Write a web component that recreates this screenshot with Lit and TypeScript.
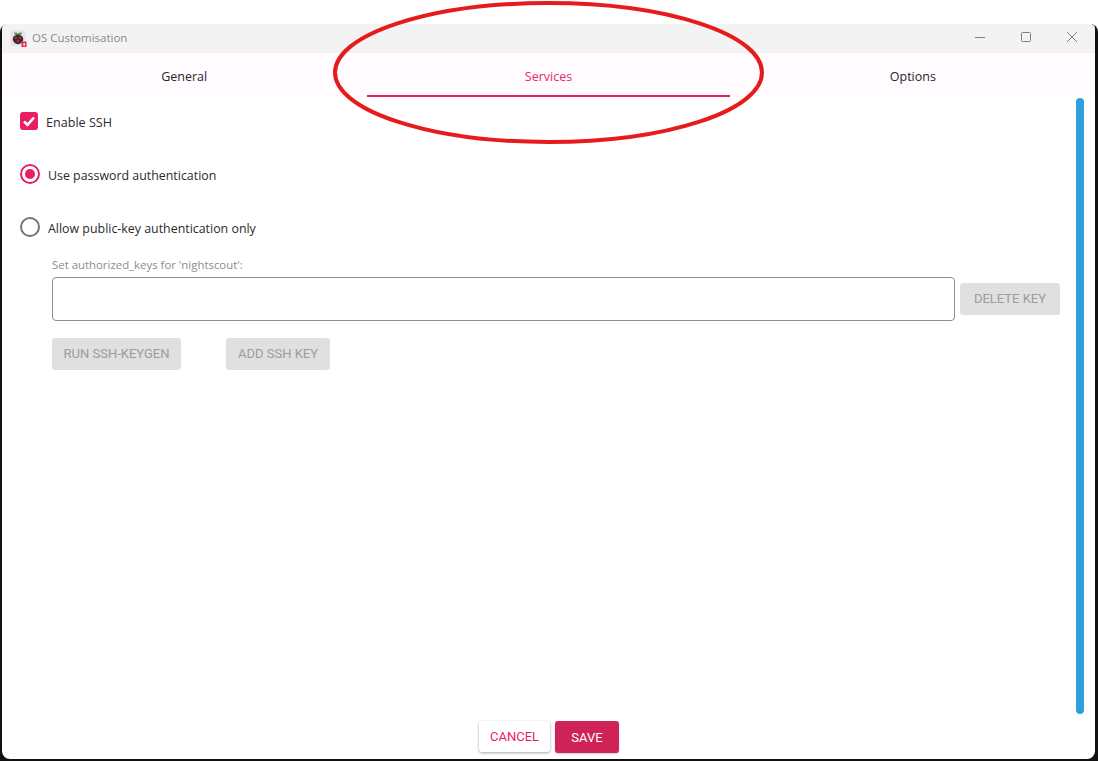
import { LitElement, html, css } from "lit";
import { customElement } from "lit/decorators.js";

@customElement("app-root")
export class AppRoot extends LitElement {
  static styles = css`
    :host { display: block; width: 1098px; height: 761px; position: relative; overflow: hidden; background: #fff; font-family: "Open Sans", "Noto Sans", sans-serif; }
    * { box-sizing: border-box; }
    .frame { margin-top: 24px; height: 737px; background: #111; padding: 0 3px 2px 2px; border-radius: 8px 8px 0 0; display: flex; }
    .win { flex: 1; background: #fff; border-radius: 5px 5px 8px 8px; overflow: hidden; display: flex; flex-direction: column; position: relative; }
    .title { height: 29px; background: #f3f3f3; display: flex; align-items: center; padding-left: 8px; font-size: 11.5px; color: #8a8a8a; gap: 5px; flex: none; }
    .title .text { flex: 1; padding-bottom: 2px; }
    .ctl { display: flex; }
    .ctl svg { width: 46px; height: 29px; display: block; stroke: #7f7f7f; fill: none; stroke-width: 1; }
    .tabs { height: 44px; background: #fffbff; display: grid; grid-template-columns: repeat(3, 1fr); flex: none; }
    .tab { display: flex; align-items: center; justify-content: center; font-size: 12.5px; color: #26262b; padding-top: 2px; position: relative; }
    .tab.on { color: #ea2a6c; }
    .tab.on::after { content: ""; position: absolute; left: 1px; right: 1px; bottom: 0; height: 2px; background: #e01f5e; }
    .body { flex: 1; display: flex; min-height: 0; position: relative; }
    .content { flex: 1; padding: 15px 16px 0 18px; display: flex; flex-direction: column; }
    .bar { width: 8px; margin: 1px 11px 45px 0; background: #2f9fda; border-radius: 4px; flex: none; }
    .check-row { display: flex; align-items: center; height: 18px; gap: 8px; font-size: 12.6px; color: #2a2a2e; }
    .check-row span { padding-top: 2px; }
    .check { width: 18px; height: 18px; background: #e91e63; border-radius: 3px; display: block; }
    .radio-row { display: flex; align-items: center; height: 20px; gap: 8px; font-size: 12.4px; color: #2a2a2e; margin-top: 33px; }
    .radio-row.first { margin-top: 34px; }
    .radio-row span + span { padding-top: 2px; }
    .radio { width: 20px; height: 20px; border-radius: 50%; border: 2px solid #757575; flex: none; display: flex; align-items: center; justify-content: center; }
    .radio.on { border-color: #e91e63; }
    .radio.on::after { content: ""; width: 10px; height: 10px; border-radius: 50%; background: #e91e63; }
    .sub { margin-left: 32px; padding-top: 21px; }
    .cap { font-size: 11.4px; line-height: 13px; color: #8c8c8c; height: 15px; margin-bottom: 4px; }
    .key-row { display: flex; align-items: center; gap: 5px; }
    .input { flex: 1; height: 44px; border: 1px solid #8f8f8f; border-radius: 4px; background: #fff; }
    .btn { height: 32px; border-radius: 3px; background: #e0e0e0; color: #9c9c9c; font: 400 13px "Roboto", sans-serif; display: flex; align-items: center; justify-content: center; flex: none; padding-bottom: 1px; }
    .del { width: 100px; }
    .gen { width: 129px; }
    .add { width: 104px; }
    .btn-row { display: flex; gap: 45px; margin-top: 17px; }
    .foot { position: absolute; left: 0; right: 0; bottom: 6px; display: flex; justify-content: center; gap: 5px; align-items: flex-start; }
    .cancel, .save { font: 400 13px "Roboto", sans-serif; border-radius: 3px; display: flex; align-items: center; justify-content: center; }
    .cancel { width: 71px; height: 31px; background: #fff; color: #e91e63; box-shadow: 0 1px 3px rgba(0,0,0,.35); padding-left: 1px; }
    .save { width: 64px; height: 32px; background: #cf2357; color: #fff; box-shadow: 0 1px 2px rgba(0,0,0,.2); padding-left: 1px; }
    .ring { position: absolute; left: 331px; top: 0; width: 436px; height: 146px; pointer-events: none; }
  `;

  render() {
    return html`
      <div class="frame">
        <div class="win">
          <div class="title">
            <svg width="17" height="17" viewBox="0 0 17 17">
              <rect x="0.500" y="0.500" width="15" height="15.500" rx="2" fill="#e4e4e4"/>
              <path d="M4 2.800c1.500-.6 3-.2 4 .9 1-1.100 2.500-1.500 4-.9-.2 1.300-1.100 2.100-2.300 2.500H6.300C5.100 4.900 4.200 4.100 4 2.800z" fill="#4f9a4a"/>
              <path d="M8 4.800c3 0 5.200 1.700 5.200 4.200 0 2.800-2.600 5.200-5.200 5.200S2.800 11.800 2.800 9c0-2.500 2.200-4.200 5.200-4.200z" fill="#3c2a30"/>
              <circle cx="5.700" cy="7.800" r="1.400" fill="#b3224a"/><circle cx="10.300" cy="7.800" r="1.400" fill="#b3224a"/><circle cx="8" cy="11" r="1.500" fill="#b3224a"/>
              <rect x="11.500" y="11.500" width="5" height="5.500" fill="#e32a4f"/><rect x="13.500" y="13" width="1.200" height="3" fill="#fff"/>
            </svg>
            <span class="text">OS Customisation</span>
            <div class="ctl">
              <svg viewBox="0 0 46 29"><path d="M18 13.500h10"/></svg>
              <svg viewBox="0 0 46 29"><rect x="18.500" y="8.500" width="9" height="9" rx="1"/></svg>
              <svg viewBox="0 0 46 29"><path d="M18 8l10 10M28 8L18 18"/></svg>
            </div>
          </div>
          <div class="tabs">
            <div class="tab">General</div>
            <div class="tab on">Services</div>
            <div class="tab">Options</div>
          </div>
          <div class="body">
            <div class="content">
              <div class="check-row">
                <svg class="check" viewBox="0 0 18 18"><path d="M4 9.500l3.500 3.300L14 5.500" fill="none" stroke="#fff" stroke-width="2.600"/></svg>
                <span>Enable SSH</span>
              </div>
              <div class="radio-row first"><span class="radio on"></span><span>Use password authentication</span></div>
              <div class="radio-row"><span class="radio"></span><span>Allow public-key authentication only</span></div>
              <div class="sub">
                <div class="cap">Set authorized_keys for 'nightscout':</div>
                <div class="key-row">
                  <div class="input"></div>
                  <div class="btn del">DELETE KEY</div>
                </div>
                <div class="btn-row">
                  <div class="btn gen">RUN SSH-KEYGEN</div>
                  <div class="btn add">ADD SSH KEY</div>
                </div>
              </div>
            </div>
            <div class="bar"></div>
            <div class="foot">
              <div class="cancel">CANCEL</div>
              <div class="save">SAVE</div>
            </div>
          </div>
        </div>
      </div>
      <svg class="ring" viewBox="0 0 436 146">
        <ellipse cx="217.500" cy="72.500" rx="213.500" ry="69.500" fill="none" stroke="#e61c1c" stroke-width="4"/>
      </svg>
    `;
  }
}
